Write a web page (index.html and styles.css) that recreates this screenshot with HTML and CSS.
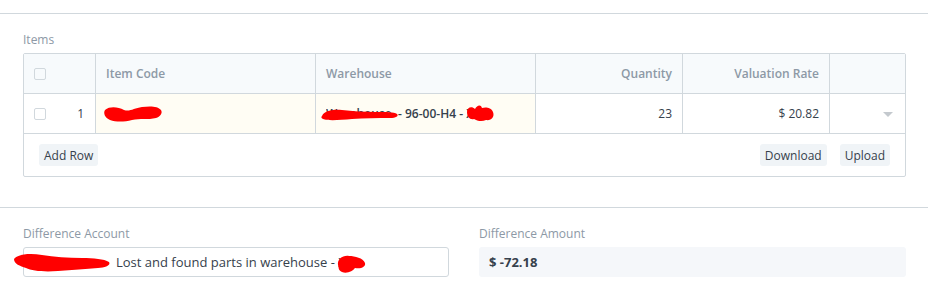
FILE: index.html
```html
<!DOCTYPE html>
<html lang="en">
<head>
    <meta charset="UTF-8">
    <title>Stock Reconciliation</title>
    <link rel="stylesheet" href="styles.css">
</head>
<body>
    <div class="top-space"></div>

    <!-- Items table section -->
    <section class="form-section">
        <div class="field-label">Items</div>
        <div class="grid">
            <div class="grid-row grid-head">
                <div class="cell cell-check"><span class="checkbox"></span></div>
                <div class="cell">Item Code</div>
                <div class="cell">Warehouse</div>
                <div class="cell right">Quantity</div>
                <div class="cell right">Valuation Rate</div>
                <div class="cell"></div>
            </div>
            <div class="grid-row grid-body">
                <div class="cell cell-check"><span class="checkbox"></span><span class="idx">1</span></div>
                <div class="cell cream redacted">
                    <span class="strong">B</span>
                    <svg class="scribble s-item" width="62" height="20" viewBox="0 0 62 20">
                        <path d="M3 7 C8 3 16 4 22 7 C28 9 32 5 40 4 C48 3 56 3 59 7 C61 10 58 14 54 15 C46 17 38 15 30 17 C22 19 14 19 8 17 C3 15 1 10 3 7 Z" fill="#ff0000"/>
                    </svg>
                </div>
                <div class="cell cream redacted">
                    <span class="strong"><span class="hidden-part w-wh">Warehouse</span>- 96-00-H4 - <span class="hidden-part w-wh2">XX</span></span>
                    <svg class="scribble s-wh" width="80" height="16" viewBox="0 0 80 16">
                        <path d="M2 10 C4 5 12 3 22 4 C32 5 44 6 56 6 C66 6 74 6 77 8 C79 10 76 12 70 12 C58 12 44 12 32 13 C20 14 8 15 3 13 C1 12 1 11 2 10 Z" fill="#ff0000"/>
                    </svg>
                    <svg class="scribble s-wh2" width="30" height="20" viewBox="0 0 30 20">
                        <path d="M2 9 C2 4 7 3 10 6 C12 2 16 1 17 5 C20 4 26 4 28 9 C30 14 26 18 21 17 C17 19 12 18 9 16 C5 17 2 14 2 9 Z" fill="#ff0000"/>
                    </svg>
                </div>
                <div class="cell right">23</div>
                <div class="cell right">$ 20.82</div>
                <div class="cell cell-caret"><span class="caret"></span></div>
            </div>
            <div class="grid-footer">
                <button class="btn">Add Row</button>
                <div class="footer-right">
                    <button class="btn">Download</button>
                    <button class="btn">Upload</button>
                </div>
            </div>
        </div>
    </section>

    <!-- Difference section -->
    <section class="form-section diff-section">
        <div class="column">
            <div class="field-label">Difference Account</div>
            <div class="input redacted">
                <span class="input-text"><span class="hidden-part w-acc">Account</span>Lost and found parts in warehouse - <span class="hidden-part w-acc2">X</span></span>
                <svg class="scribble s-acc" width="100" height="24" viewBox="0 0 100 24">
                    <path d="M2 9 C6 4 18 3 30 5 C42 7 56 8 70 8 C82 8 92 9 97 12 C99 15 94 18 86 18 C74 19 60 20 46 21 C32 22 20 21 14 18 C8 16 2 14 2 9 Z" fill="#ff0000"/>
                </svg>
                <svg class="scribble s-acc2" width="32" height="22" viewBox="0 0 32 22">
                    <path d="M3 12 C2 6 8 2 14 3 C20 3 28 5 30 10 C31 14 26 16 20 15 C18 18 12 21 7 19 C3 17 4 15 3 12 Z" fill="#ff0000"/>
                </svg>
            </div>
        </div>
        <div class="column">
            <div class="field-label">Difference Amount</div>
            <div class="readonly">$ -72.18</div>
        </div>
    </section>
</body>
</html>
```
FILE: styles.css
```css
/* Form layout */
* {
    box-sizing: border-box;
}
body {
    font-family: "Open Sans", "Noto Sans", sans-serif;
    font-size: 12px;
    color: #36414c;
    margin: 0;
    background-color: #fff;
}
.top-space {
    height: 14px;
    border-bottom: 1px solid #d1d8dd;
}
.form-section {
    padding: 17px 22px 30px 23px;
    border-bottom: 1px solid #d1d8dd;
}
.field-label {
    color: #8d99a6;
    font-size: 12px;
    line-height: 18px;
    margin-bottom: 4px;
}

/* Items grid */
.grid {
    border: 1px solid #d1d8dd;
    border-radius: 2px;
}
.grid-row {
    display: grid;
    grid-template-columns: 72px 220px 220px 147px 147px 1fr;
    height: 40px;
    border-bottom: 1px solid #d1d8dd;
}
.grid-head {
    background-color: #f7fafc;
    color: #8d99a6;
    font-weight: 600;
}
.cell {
    display: flex;
    align-items: center;
    padding: 0 10px;
    border-right: 1px solid #d1d8dd;
    position: relative;
    white-space: nowrap;
}
.cell:last-child {
    border-right: none;
}
.right {
    justify-content: flex-end;
}
.cream {
    background-color: #fffdf4;
}
.cell-check {
    padding-left: 10px;
    justify-content: space-between;
}
.checkbox {
    width: 12px;
    height: 12px;
    border: 1px solid #d1d8dd;
    border-radius: 2px;
    background-color: #fff;
}
.grid-head .checkbox {
    background-color: transparent;
}
.idx {
    padding-right: 1px;
}
.strong {
    font-weight: 600;
}
.cell-caret {
    justify-content: flex-end;
    padding-right: 12px;
}
.caret {
    width: 0;
    height: 0;
    border-left: 5px solid transparent;
    border-right: 5px solid transparent;
    border-top: 5px solid #c4c9ce;
    margin-top: 2px;
}
.grid-footer {
    display: flex;
    justify-content: space-between;
    align-items: center;
    padding: 10px 15px 10px 15px;
    height: 42px;
}
.footer-right {
    display: flex;
    gap: 13px;
}
.btn {
    font-family: inherit;
    font-size: 12px;
    color: #36414c;
    background-color: #f0f4f7;
    border: none;
    border-radius: 3px;
    padding: 0 5px;
    height: 22px;
}

/* Difference fields */
.diff-section {
    display: grid;
    grid-template-columns: 426px 1fr;
    gap: 30px;
    border-bottom: none;
    padding-top: 17px;
}
.input {
    height: 30px;
    border: 1px solid #d1d8dd;
    border-radius: 3px;
    display: flex;
    align-items: center;
    padding-left: 8px;
    font-size: 13px;
    position: relative;
    white-space: nowrap;
}
.readonly {
    height: 30px;
    background-color: #f5f7fa;
    border-radius: 3px;
    display: flex;
    align-items: center;
    padding-left: 10px;
    font-size: 13px;
    font-weight: 700;
}

/* Redaction marks */
.hidden-part {
    display: inline-block;
    overflow: hidden;
    vertical-align: bottom;
    color: #36414c;
}
.w-wh {
    width: 72px;
}
.w-wh2 {
    width: 16px;
}
.w-acc {
    width: 84px;
}
.w-acc2 {
    width: 10px;
}
.scribble {
    position: absolute;
}
.s-item {
    left: 6px;
    top: 9px;
}
.s-wh {
    left: 4px;
    top: 12px;
}
.s-wh2 {
    left: 149px;
    top: 9px;
}
.s-acc {
    left: -12px;
    top: 2px;
}
.s-acc2 {
    left: 311px;
    top: 5px;
}
```
